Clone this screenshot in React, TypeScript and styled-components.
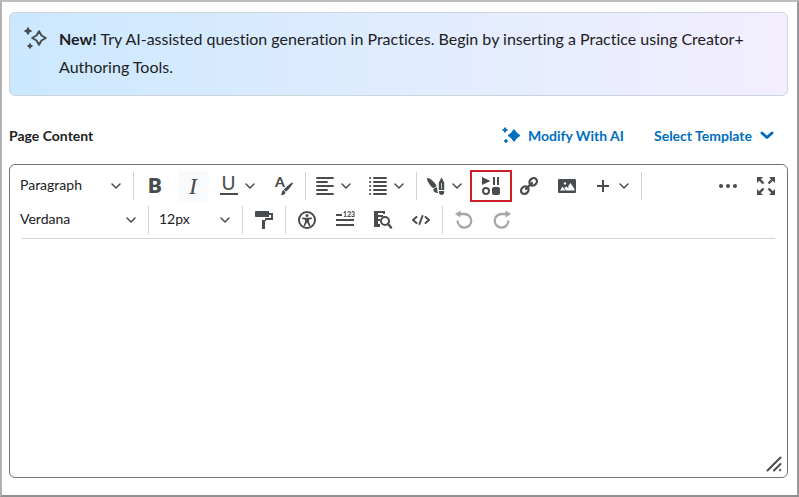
import React from "react";
import styled, { createGlobalStyle, css } from "styled-components";

const ink = "#494c4e";
const blue = "#006fbf";
const line = "#cdd5dc";

const GlobalStyle = createGlobalStyle`
  *, *::before, *::after { box-sizing: border-box; }
  body {
    margin: 0;
    background: #fff;
    color: #202122;
    font-family: Lato, "Open Sans", sans-serif;
    font-variant-ligatures: none;
  }
  button, select, textarea { font: inherit; color: inherit; }
`;

const Frame = styled.main`
  display: flex;
  flex-direction: column;
  min-height: 100vh;
  padding: 10px 9px 17px 7px;
  border: 2px solid;
  border-color: #bdbdbd #999 #8f8f8f #b1b1b1;
`;

const Banner = styled.aside`
  display: flex;
  gap: 10px;
  padding: 12px 20px 14px 13px;
  border: 1px solid ${line};
  border-radius: 6px;
  background: linear-gradient(to right, #cbe8ff, #e0ecff 50%, #f3eefe);
  svg { flex: none; }
`;

const BannerText = styled.p`
  margin: 0;
  font-size: 16px;
  line-height: 28px;
`;

const FieldHeader = styled.header`
  display: flex;
  align-items: center;
  height: 68px;
  padding: 10px 13px 0 0;
  font-size: 14px;
  font-weight: 700;
`;

const FieldLabel = styled.label`
  margin-right: auto;
`;

const LinkButton = styled.button`
  display: flex;
  align-items: center;
  gap: 7px;
  margin-left: 30px;
  padding: 0;
  border: 0;
  background: none;
  color: ${blue};
  cursor: pointer;
`;

const Editor = styled.section`
  display: flex;
  flex: 1;
  flex-direction: column;
  border: 1px solid #6e7376;
  border-radius: 6px;
  padding-top: 4px;
  position: relative;
`;

const Toolbar = styled.div`
  color: ${ink};
`;

const Row = styled.div`
  display: flex;
  align-items: center;
  height: 34px;
`;

const Group = styled.div<{ $last?: boolean; $end?: boolean }>`
  display: flex;
  align-items: center;
  height: 28px;
  padding: 0 2px;
  ${(p) => !p.$last && css`
    box-sizing: content-box;
    border-right: 1px solid ${line};
  `}
  ${(p) => p.$end && css`margin-left: auto;`}
`;

const Tool = styled.button<{ $split?: boolean; $active?: boolean; $marked?: boolean }>`
  display: flex;
  align-items: center;
  justify-content: ${(p) => (p.$split ? "flex-start" : "center")};
  gap: 7px;
  flex: none;
  width: ${(p) => (p.$split ? 53 : 38)}px;
  height: ${(p) => (p.$marked ? 28 : 30)}px;
  padding: 0 ${(p) => (p.$split ? 8 : 0)}px;
  border: 0;
  background: none;
  cursor: pointer;
  svg { flex: none; overflow: visible; }
  &:disabled { color: #a5a6a7; }
  ${(p) => p.$active && css`
    background: #f9fafb;
    background-clip: content-box;
    padding: 0 4px;
    border-radius: 4px;
  `}
  ${(p) => p.$marked && css`outline: 2px solid #cd2026;`}
`;

const Pick = styled.div<{ $width: number }>`
  display: grid;
  align-items: center;
  width: ${(p) => p.$width}px;
  select, svg { grid-area: 1 / 1; }
  svg { justify-self: end; margin-right: 10px; pointer-events: none; }
`;

const Select = styled.select`
  appearance: none;
  width: 100%;
  height: 28px;
  padding: 0 24px 3px 8px;
  border: 0;
  background: none;
  color: #202122;
  font-size: 14px;
  cursor: pointer;
`;

const BoldGlyph = styled.span`
  font: 900 21px/30px Roboto, Arial, sans-serif;
`;

const ItalicGlyph = styled.span`
  font: italic 24px/30px "Liberation Serif", serif;
`;

const Rule = styled.hr`
  width: auto;
  height: 1px;
  margin: 1px 12px 0;
  border: 0;
  background: ${line};
`;

const Content = styled.textarea`
  flex: 1;
  width: 100%;
  min-height: 120px;
  padding: 12px;
  border: 0;
  outline: 0;
  background: none;
  resize: none;
  font: 12px Verdana, "DejaVu Sans", sans-serif;
`;

const Grip = styled.svg`
  position: absolute;
  right: 5px;
  bottom: 5px;
`;

const Icon = ({ children }: { children: React.ReactNode }) => (
  <svg width="18" height="18" viewBox="0 0 18 18" fill="currentColor" aria-hidden="true">
    {children}
  </svg>
);

const Chevron = () => (
  <svg width="10" height="6" viewBox="0 0 10 6" fill="none" stroke={ink} strokeWidth="1.5" strokeLinecap="round" strokeLinejoin="round" aria-hidden="true">
    <path d="M1 1l4 4 4-4" />
  </svg>
);

const Picker = ({ label, value, width }: { label: string; value: string; width: number }) => (
  <Pick $width={width}>
    <Select aria-label={label} defaultValue={value}>
      <option>{value}</option>
    </Select>
    <Chevron />
  </Pick>
);

const star = (x: number, y: number, r: number, k: number) =>
  `M${x} ${y - r}L${x + k} ${y - k}L${x + r} ${y}L${x + k} ${y + k}L${x} ${y + r}L${x - k} ${y + k}L${x - r} ${y}L${x - k} ${y - k}Z`;

const BannerStars = () => (
  <svg width="26" height="26" viewBox="0 0 26 26" aria-hidden="true">
    <g fill={ink} stroke={ink} strokeWidth="1" strokeLinejoin="round">
      <path d={star(5, 6, 3.5, 1.2)} />
      <path d={star(7, 21, 2.5, 0.9)} />
    </g>
    <path d={star(16, 13, 6.8, 2.5)} fill="none" stroke={ink} strokeWidth="2" strokeLinejoin="round" />
  </svg>
);

const BlueStars = () => (
  <svg width="19" height="18" viewBox="0 0 19 18" fill="currentColor" stroke="currentColor" strokeLinejoin="round" aria-hidden="true">
    <path d={star(3, 4, 2.4, 0.8)} />
    <path d={star(4, 15, 1.6, 0.9)} />
    <path d={star(12, 9.5, 6, 2.5)} />
  </svg>
);

const UnderlineIcon = () => (
  <Icon>
    <text x="8.500" y="13" textAnchor="middle" fontFamily="Lato" fontSize="19">U</text>
    <path d="M0 16h18v2H0z" />
  </Icon>
);

const StyleIcon = () => (
  <Icon>
    <text x="0" y="10" fontFamily="Lato" fontWeight="900" fontSize="14">A</text>
    <path d="M18 5.500c.8.8-4.600 7.500-7 9.200L8.800 12.500C11 10 17.200 4.800 18 5.500zM8.300 13l2.200 2.200C10.300 17.500 8.500 18 5.800 18c1.300-1 .7-4 2.500-5z" />
  </Icon>
);

const AlignIcon = () => (
  <Icon>
    <g stroke="currentColor" strokeWidth="1.900" strokeLinecap="round">
      <path d="M1 1h16M1 5h10M1 9h16M1 13h10M1 17h16" />
    </g>
  </Icon>
);

const ListIcon = () => (
  <Icon>
    <g stroke="currentColor" strokeWidth="1.900" strokeLinecap="round">
      <path d="M5 1h12M5 5h12M5 9h12M5 13h12M5 17h12M1 1h.2M1 5h.2M1 9h.2M1 13h.2M1 17h.2" />
    </g>
  </Icon>
);

const PenIcon = () => (
  <Icon>
    <path d="M.2 1C2.300.2 9 6 9.500 9.200L6.200 11.200C3.500 9.500-.8 3 .2 1zM6.400 11.900l3.100-1.800c1.300 1.500.3 3.700 1.500 5.900-2.600-.3-5-1.300-4.600-4.100zM14.500.5L17.200 5.500V13h-5.400V5.500zM12 14h5.200v1.500c0 3.300-5.200 3.300-5.200 0z" />
    <path d="M14.500 6v6" stroke="#fff" strokeWidth=".7" />
  </Icon>
);

const MediaIcon = () => (
  <Icon>
    <path d="M0 0l8.500 4L0 8zM11 0h2v8h-2zM15 0h2v8h-2z" />
    <circle cx="4" cy="14" r="3" fill="none" stroke="currentColor" strokeWidth="2" />
    <rect x="10" y="10" width="8" height="8" rx="2" />
  </Icon>
);

const LinkIcon = () => (
  <Icon>
    <g fill="none" stroke="currentColor" strokeWidth="2.300">
      <ellipse cx="4.800" cy="13.200" rx="4" ry="3.400" transform="rotate(-45 4.800 13.200)" />
      <ellipse cx="13.200" cy="4.800" rx="4" ry="3.400" transform="rotate(-45 13.200 4.800)" />
      <path d="M6 12l6-6" strokeLinecap="round" />
    </g>
  </Icon>
);

const ImageIcon = () => (
  <Icon>
    <path fillRule="evenodd" d="M1.500 2h15c1 0 1.500.5 1.500 1.500v11c0 1-.5 1.500-1.500 1.500h-15C.5 16 0 15.500 0 14.500v-11C0 2.500.5 2 1.500 2zM2 13.500h5.500L4.500 9.500zM8 13.500h8.500V12L12.500 6 10 9.500l1 2-3-2-1.500 1.500zM7 5.200a1.200 1.200 0 1 0 0 2.400 1.200 1.200 0 0 0 0-2.400z" />
  </Icon>
);

const PlusIcon = () => (
  <Icon><path d="M8 3h2v5h5v2h-5v5H8v-5H3V8h5z" /></Icon>
);

const DotsIcon = () => (
  <Icon><circle cx="2" cy="9" r="2" /><circle cx="9" cy="9" r="2" /><circle cx="16" cy="9" r="2" /></Icon>
);

const ExpandIcon = () => (
  <Icon>
    <path d="M0 0h6L0 6zM18 0v6l-6-6zM0 18v-6l6 6zM18 18h-6l6-6z" />
    <path d="M2 2l4.500 4.500M16 2l-4.500 4.500M2 16l4.500-4.500M16 16l-4.500-4.500" stroke="currentColor" strokeWidth="2.400" />
  </Icon>
);

const PainterIcon = () => (
  <Icon>
    <path d="M1 0h13v2h4v7h-7v1h-1v8H7V9h3V7h6V4h-2v2H1C.3 6 0 5.700 0 5V1C0 .3.3 0 1 0z" />
  </Icon>
);

const AccessIcon = () => (
  <Icon>
    <circle cx="9" cy="9" r="8" fill="none" stroke="currentColor" strokeWidth="2" />
    <circle cx="9" cy="4.500" r="1.500" />
    <path d="M4 6.500l3.500.3h3L14 6.500v1.300l-3 .9v2l1.500 4-1.200.5L9 11.500l-2.300 3.700-1.200-.5 1.500-4v-2l-3-.9z" />
  </Icon>
);

const CountIcon = () => (
  <Icon>
    <path d="M0 3h6v2H0zM0 8h18v2H0zM0 13h18v2H0z" />
    <text x="7" y="6" fontFamily="Lato" fontWeight="900" fontSize="7">123</text>
  </Icon>
);

const FindIcon = () => (
  <Icon>
    <path d="M0 0h11v3H9V2H4v2h5v2H4v2h2v2H4v3h2v3H0z" />
    <circle cx="11" cy="10" r="4" fill="#fff" stroke="currentColor" strokeWidth="2" />
    <path d="M14 13l3 3.500" stroke="currentColor" strokeWidth="2.500" strokeLinecap="round" />
  </Icon>
);

const CodeIcon = () => (
  <Icon>
    <path d="M4.500 6L1 9l3.500 3M13.500 6L17 9l-3.500 3M10.500 5l-3 8" fill="none" stroke="currentColor" strokeWidth="2" strokeLinecap="round" strokeLinejoin="round" />
  </Icon>
);

const TurnArrow = () => (
  <>
    <path d="M4 3h5.500a6.800 6.800 0 1 1-6.800 7.500" fill="none" stroke="currentColor" strokeWidth="2.300" strokeLinecap="round" />
    <path d="M0 3l5.500-3.500v7z" />
  </>
);

const UndoIcon = () => <Icon><TurnArrow /></Icon>;

const RedoIcon = () => (
  <Icon>
    <g transform="matrix(-1 0 0 1 18 0)"><TurnArrow /></g>
  </Icon>
);

export default function App() {
  return (
    <>
      <GlobalStyle />
      <Frame>
        <Banner>
          <BannerStars />
          <BannerText>
            <strong>New!</strong> Try AI-assisted question generation in Practices. Begin by inserting a Practice using Creator+ Authoring Tools.
          </BannerText>
        </Banner>
        <FieldHeader>
          <FieldLabel htmlFor="page-content">Page Content</FieldLabel>
          <LinkButton type="button"><BlueStars />Modify With AI</LinkButton>
          <LinkButton type="button">
            Select Template
            <svg width="16" height="10" viewBox="0 0 16 10" fill="none" stroke="currentColor" strokeWidth="3" strokeLinecap="round" strokeLinejoin="round" aria-hidden="true">
              <path d="M3 3l5 4.500L13 3" />
            </svg>
          </LinkButton>
        </FieldHeader>
        <Editor>
          <Toolbar role="toolbar" aria-label="Formatting">
            <Row>
              <Group><Picker label="Format" value="Paragraph" width={119} /></Group>
              <Group>
                <Tool aria-label="Bold"><BoldGlyph>B</BoldGlyph></Tool>
                <Tool aria-label="Italic" $active><ItalicGlyph>I</ItalicGlyph></Tool>
                <Tool aria-label="Underline" $split><UnderlineIcon /><Chevron /></Tool>
                <Tool aria-label="Text style"><StyleIcon /></Tool>
              </Group>
              <Group>
                <Tool aria-label="Alignment" $split><AlignIcon /><Chevron /></Tool>
                <Tool aria-label="List" $split><ListIcon /><Chevron /></Tool>
              </Group>
              <Group>
                <Tool aria-label="Authoring tools" $split><PenIcon /><Chevron /></Tool>
                <Tool aria-label="Insert stuff" $marked><MediaIcon /></Tool>
                <Tool aria-label="Insert link"><LinkIcon /></Tool>
                <Tool aria-label="Insert image"><ImageIcon /></Tool>
                <Tool aria-label="Other insert options" $split><PlusIcon /><Chevron /></Tool>
              </Group>
              <Group $last $end>
                <Tool aria-label="More actions"><DotsIcon /></Tool>
                <Tool aria-label="Full screen"><ExpandIcon /></Tool>
              </Group>
            </Row>
            <Row>
              <Group><Picker label="Font" value="Verdana" width={134} /></Group>
              <Group><Picker label="Size" value="12px" width={89} /></Group>
              <Group><Tool aria-label="Format painter"><PainterIcon /></Tool></Group>
              <Group>
                <Tool aria-label="Accessibility checker"><AccessIcon /></Tool>
                <Tool aria-label="Word count"><CountIcon /></Tool>
                <Tool aria-label="Preview"><FindIcon /></Tool>
                <Tool aria-label="Source code"><CodeIcon /></Tool>
              </Group>
              <Group $last>
                <Tool aria-label="Undo" disabled><UndoIcon /></Tool>
                <Tool aria-label="Redo" disabled><RedoIcon /></Tool>
              </Group>
            </Row>
          </Toolbar>
          <Rule />
          <Content id="page-content" />
          <Grip width="16" height="16" viewBox="0 0 16 16" fill="none" stroke={ink} strokeWidth="2" strokeLinecap="round" aria-hidden="true">
            <path d="M1.500 14.500l13-13M8 14.500L14.500 8M14 14.200l.3-.3" />
          </Grip>
        </Editor>
      </Frame>
    </>
  );
}
